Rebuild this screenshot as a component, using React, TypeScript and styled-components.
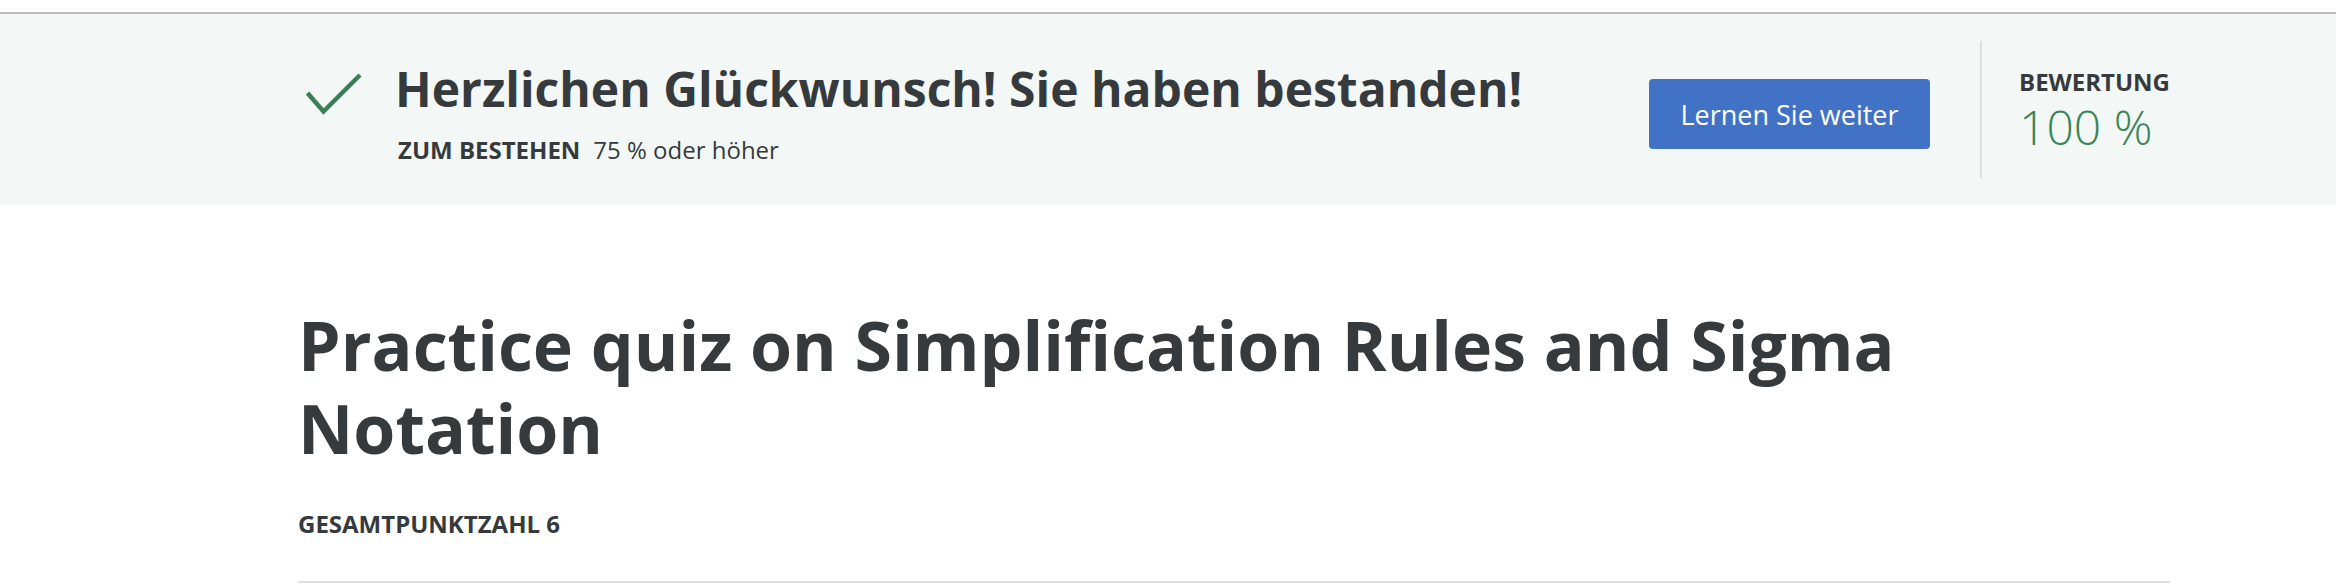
import React from 'react';
import styled, { createGlobalStyle } from 'styled-components';

const GlobalStyle = createGlobalStyle`
  html, body {
    margin: 0;
    padding: 0;
    background: #ffffff;
    font-family: "Open Sans", "Noto Sans", sans-serif;
    color: #373a3c;
  }
`;

const TopSpacer = styled.div`
  height: 12px;
  background: #ffffff;
  border-bottom: 2px solid #bbbbbb;
`;

const Banner = styled.section`
  background-color: #f3f8f6;
  height: 191px;
  display: flex;
  align-items: center;
  padding: 0 166px 0 298px;
  box-sizing: border-box;
`;

const ResultGroup = styled.div`
  display: flex;
  align-items: flex-start;
  margin-right: auto;
  margin-top: 5px;
`;

const IconWrap = styled.div`
  width: 97px;
  flex-shrink: 0;
  padding: 12px 0 0 7px;
  box-sizing: border-box;
`;

const TextColumn = styled.div`
  display: flex;
  flex-direction: column;
`;

const ResultTitle = styled.h2`
  margin: 0;
  font-size: 48px;
  line-height: 60px;
  font-weight: 700;
  color: #373a3c;
  white-space: nowrap;
`;

const PassLine = styled.div`
  margin: 15px 0 0 3px;
  font-size: 24px;
  line-height: 32px;
  white-space: nowrap;
`;

const PassLabel = styled.span`
  font-weight: 700;
  margin-right: 13px;
`;

const ActionGroup = styled.div`
  display: flex;
  align-items: center;
`;

const PrimaryButton = styled.button`
  width: 281px;
  height: 70px;
  margin-top: 9px;
  padding: 0;
  border: none;
  border-radius: 4px;
  background-color: #4272c6;
  color: #ffffff;
  font-family: "Open Sans", "Noto Sans", sans-serif;
  font-size: 27px;
  font-weight: 400;
  cursor: pointer;
`;

const Divider = styled.div`
  width: 2px;
  height: 137px;
  background-color: #dcdfdd;
  margin: 0 37px 0 50px;
`;

const Score = styled.div`
  display: flex;
  flex-direction: column;
  margin-top: 1px;
`;

const ScoreLabel = styled.div`
  font-size: 24px;
  line-height: 30px;
  font-weight: 700;
  color: #373a3c;
`;

const ScoreValue = styled.div<{ $passed?: boolean }>`
  margin-top: 4px;
  font-size: 48px;
  line-height: 52px;
  font-weight: 300;
  color: ${(p) => (p.$passed ? '#3b8457' : '#b0352d')};
`;

const Main = styled.main`
  padding: 98px 166px 0 298px;
`;

const QuizTitle = styled.h1`
  margin: 0;
  font-size: 68px;
  line-height: 83px;
  font-weight: 700;
  color: #373a3c;
  max-width: 1680px;
`;

const TotalPoints = styled.div`
  margin-top: 40px;
  font-size: 24px;
  line-height: 30px;
  font-weight: 700;
  color: #373a3c;
`;

const Rule = styled.hr`
  margin: 42px 0 0;
  border: none;
  height: 2px;
  background-color: #e0e0e0;
`;

function CheckIcon() {
  return (
    <svg width="58" height="44" viewBox="0 0 58 44" fill="none">
      <polyline
        points="2.5,22 18.5,40.5 55,4"
        stroke="#3a7f57"
        strokeWidth="4.5"
        strokeLinecap="butt"
        strokeLinejoin="miter"
      />
    </svg>
  );
}

export default function App() {
  return (
    <>
      <GlobalStyle />
      <TopSpacer />
      <Banner>
        <ResultGroup>
          <IconWrap>
            <CheckIcon />
          </IconWrap>
          <TextColumn>
            <ResultTitle>Herzlichen Glückwunsch! Sie haben bestanden!</ResultTitle>
            <PassLine>
              <PassLabel>ZUM BESTEHEN</PassLabel>
              75 % oder höher
            </PassLine>
          </TextColumn>
        </ResultGroup>
        <ActionGroup>
          <PrimaryButton>Lernen Sie weiter</PrimaryButton>
          <Divider />
          <Score>
            <ScoreLabel>BEWERTUNG</ScoreLabel>
            <ScoreValue $passed>100 %</ScoreValue>
          </Score>
        </ActionGroup>
      </Banner>
      <Main>
        <QuizTitle>Practice quiz on Simplification Rules and Sigma Notation</QuizTitle>
        <TotalPoints>GESAMTPUNKTZAHL 6</TotalPoints>
        <Rule />
      </Main>
    </>
  );
}
